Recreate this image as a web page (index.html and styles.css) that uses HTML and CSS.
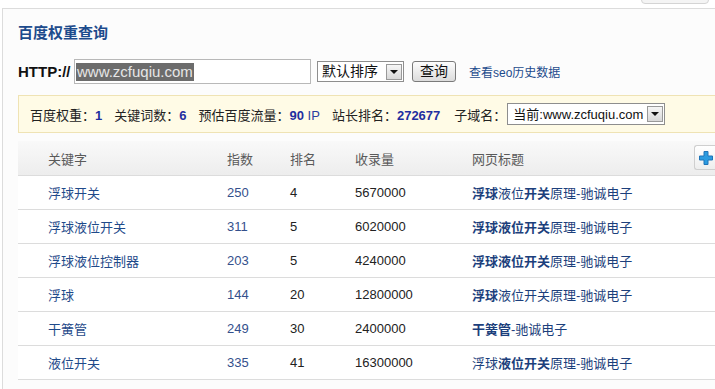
FILE: index.html
```html
<!DOCTYPE html>
<html lang="zh">
<head>
<meta charset="utf-8">
<title>百度权重查询</title>
<link rel="stylesheet" href="styles.css">
</head>
<body>
<div class="topbar"><span class="toptab"></span></div>
<div class="panel">
  <h1 class="title">百度权重查询</h1>
  <div class="form">
    <span class="proto">HTTP://</span>
    <span class="input"><span class="sel">www.zcfuqiu.com</span></span>
    <span class="select sort"><span class="sel-text">默认排序</span><span class="arrow"><i></i></span></span>
    <span class="btn">查询</span>
    <a class="history" href="#">查看seo历史数据</a>
  </div>
  <div class="stats">
    <span class="item">百度权重：<b>1</b></span>
    <span class="item">关键词数：<b>6</b></span>
    <span class="item">预估百度流量：<b>90</b> <em>IP</em></span>
    <span class="item wide">站长排名：<b>272677</b></span>
    <span class="item last">子域名：</span>
    <span class="select sub"><span class="sel-text">当前:www.zcfuqiu.com</span><span class="arrow"><i></i></span></span>
  </div>
  <div class="table">
    <div class="row head">
      <span class="c1">关键字</span><span class="c2">指数</span><span class="c3">排名</span><span class="c4">收录量</span><span class="c5">网页标题</span>
      <span class="plus"><svg width="14" height="14" viewBox="0 0 14 14"><path d="M5 0.5h4v4.5h4.5v4h-4.5v4.5h-4v-4.5h-4.5v-4h4.5z" fill="#2b9be0" stroke="#1f74b8" stroke-width="1"/></svg></span>
    </div>
    <div class="row"><span class="c1 kw">浮球开关</span><span class="c2 idx">250</span><span class="c3">4</span><span class="c4">5670000</span><span class="c5 pt"><b>浮球</b>液位<b>开关</b>原理-驰诚电子</span></div>
    <div class="row"><span class="c1 kw">浮球液位开关</span><span class="c2 idx">311</span><span class="c3">5</span><span class="c4">6020000</span><span class="c5 pt"><b>浮球液位开关</b>原理-驰诚电子</span></div>
    <div class="row"><span class="c1 kw">浮球液位控制器</span><span class="c2 idx">203</span><span class="c3">5</span><span class="c4">4240000</span><span class="c5 pt"><b>浮球液位开关</b>原理-驰诚电子</span></div>
    <div class="row"><span class="c1 kw">浮球</span><span class="c2 idx">144</span><span class="c3">20</span><span class="c4">12800000</span><span class="c5 pt"><b>浮球</b>液位开关原理-驰诚电子</span></div>
    <div class="row"><span class="c1 kw">干簧管</span><span class="c2 idx">249</span><span class="c3">30</span><span class="c4">2400000</span><span class="c5 pt"><b>干簧管</b>-驰诚电子</span></div>
    <div class="row"><span class="c1 kw">液位开关</span><span class="c2 idx">335</span><span class="c3">41</span><span class="c4">16300000</span><span class="c5 pt">浮球<b>液位开关</b>原理-驰诚电子</span></div>
  </div>
</div>
</body>
</html>
```
FILE: styles.css
```css
html, body {
  margin: 0;
  padding: 0;
  background: #fff;
  overflow: hidden;
  height: 389px;
  font-family: "Liberation Sans", "Noto Sans CJK SC", sans-serif;
  color: #222;
}
.topbar {
  height: 8px;
  position: relative;
}
.toptab {
  position: absolute;
  left: 641px;
  top: -4px;
  width: 66px;
  height: 6px;
  border: 1px solid #d4d4d4;
  border-radius: 0 0 4px 4px;
  background: #f4f4f4;
}
.panel {
  margin-left: 2px;
  border-top: 1px solid #dcdcdc;
  border-left: 1px solid #dcdcdc;
  background: #fcfcfc;
  padding: 15px 0 0 15px;
  height: 365px;
  overflow: hidden;
}
.title {
  margin: 0;
  font-size: 15px;
  line-height: 18px;
  font-weight: bold;
  color: #1d4b8c;
}
.form {
  margin-top: 17px;
  display: flex;
  align-items: center;
  height: 25px;
}
.proto {
  font-size: 15px;
  font-weight: bold;
  color: #111;
  width: 56px;
}
.input {
  box-sizing: border-box;
  width: 237px;
  height: 25px;
  border: 1px solid #b8b8b8;
  background: #fff;
  display: flex;
  align-items: center;
  padding-left: 1px;
}
.sel {
  background: #6c6c6c;
  color: #e6e6e6;
  font-size: 15px;
  line-height: 18px;
  padding: 0 1px;
}
.select {
  box-sizing: border-box;
  display: flex;
  align-items: center;
  justify-content: space-between;
  background: #fff;
  border: 1px solid #8e8e8e;
  color: #111;
  padding: 1px;
}
.sort {
  margin-left: 6px;
  width: 87px;
  height: 21px;
  font-size: 14px;
}
.sel-text {
  padding-left: 3px;
  line-height: 17px;
}
.arrow {
  box-sizing: border-box;
  width: 16px;
  height: 16px;
  border: 1px solid #999;
  background: linear-gradient(#f6f6f6, #d8d8d8);
  display: flex;
  align-items: center;
  justify-content: center;
}
.arrow i {
  width: 0;
  height: 0;
  border-left: 4px solid transparent;
  border-right: 4px solid transparent;
  border-top: 4px solid #111;
}
.btn {
  box-sizing: border-box;
  margin-left: 8px;
  width: 44px;
  height: 21px;
  border: 1px solid #7a7a7a;
  border-radius: 3px;
  background: linear-gradient(#fdfdfd, #dcdcdc);
  font-size: 14px;
  line-height: 19px;
  text-align: center;
  color: #111;
}
.history {
  margin-left: 13px;
  font-size: 12px;
  color: #1d4b8c;
  text-decoration: none;
  line-height: 18px;
  padding-top: 2px;
}
.stats {
  margin-top: 11px;
  box-sizing: border-box;
  height: 38px;
  margin-right: -2px;
  border: 1px solid #efe3b4;
  border-right: 0;
  background: #fffbe6;
  display: flex;
  align-items: center;
  padding-left: 11px;
  font-size: 13px;
  color: #222;
}
.stats .item {
  margin-right: 12px;
  white-space: nowrap;
}
.stats .item.wide {
  margin-right: 14px;
}
.stats .item.last {
  margin-right: 1px;
}
.stats b {
  color: #1f2fa0;
  font-weight: bold;
}
.stats em {
  font-style: normal;
  color: #2a3fa0;
}
.sub {
  width: 158px;
  height: 22px;
  font-size: 13px;
}
.sub .sel-text {
  padding-left: 4px;
}
.table {
  margin-top: 8px;
  font-size: 13px;
}
.row {
  display: flex;
  align-items: center;
  height: 33px;
  border-bottom: 1px solid #dcdcdc;
  background: #fff;
}
.row.head {
  position: relative;
  height: 34px;
  background: linear-gradient(#f9f9f9, #ededed);
  border-bottom: 1px solid #dcdcdc;
  color: #5a5a5a;
}
.c1 { width: 179px; padding-left: 30px; flex: none; }
.c2 { width: 63px; flex: none; }
.c3 { width: 65px; flex: none; }
.c4 { width: 117px; flex: none; }
.c5 { flex: 1; white-space: nowrap; }
.kw { color: #1f4a8a; }
.idx { color: #34508c; }
.pt { color: #1c3f7c; }
.pt b { font-weight: bold; }
.plus {
  position: absolute;
  left: 676px;
  top: 4px;
  box-sizing: border-box;
  width: 22px;
  height: 25px;
  border: 1px solid #cfcfcf;
  border-right: 0;
  border-radius: 3px 0 0 3px;
  background: linear-gradient(#ffffff, #eeeeee);
  display: flex;
  align-items: center;
  padding-left: 4px;
}
.plus svg { display: block; }
```
